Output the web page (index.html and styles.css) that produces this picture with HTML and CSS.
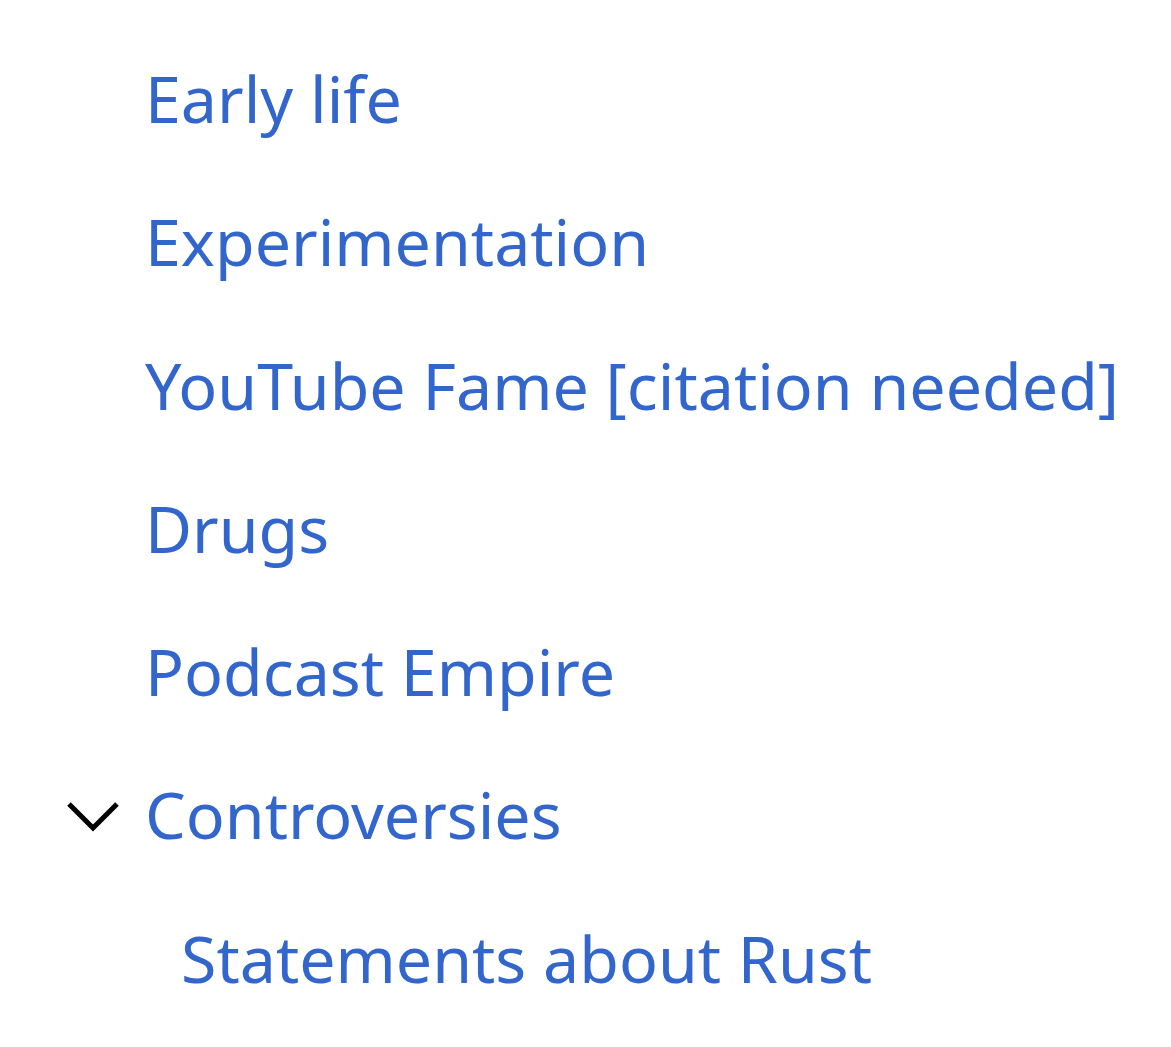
FILE: index.html
```html
<!DOCTYPE html>
<html lang="en">
<head>
<meta charset="utf-8">
<link rel="stylesheet" href="styles.css">
<title>Contents</title>
</head>
<body>
<nav class="toc">
  <ul class="toc-list">
    <li class="toc-item"><a class="toc-link" href="#early">Early life</a></li>
    <li class="toc-item"><a class="toc-link" href="#exp">Experimentation</a></li>
    <li class="toc-item"><a class="toc-link" href="#yt">YouTube Fame [citation needed]</a></li>
    <li class="toc-item"><a class="toc-link" href="#drugs">Drugs</a></li>
    <li class="toc-item"><a class="toc-link" href="#podcast">Podcast Empire</a></li>
    <li class="toc-item toc-expanded">
      <span class="toc-toggle" aria-hidden="true">
        <svg class="chevron" viewBox="0 0 56 34" width="56" height="34"><path d="M4 5 L28 29 L52 5" fill="none" stroke="#000" stroke-width="5"/></svg>
      </span>
      <a class="toc-link" href="#contro">Controversies</a>
    </li>
    <li class="toc-item toc-sub"><a class="toc-link" href="#rust">Statements about Rust</a></li>
  </ul>
</nav>
</body>
</html>
```
FILE: styles.css
```css
html, body {
  margin: 0;
  padding: 0;
  background: #fff;
}
body {
  font-family: "Noto Sans", "Open Sans", sans-serif;
}
.toc {
  padding-top: 27px;
}
.toc-list {
  list-style: none;
  margin: 0;
  padding: 0 0 0 145px;
}
.toc-item {
  position: relative;
  font-size: 64.5px;
  line-height: 143.3px;
  white-space: nowrap;
}
.toc-link {
  color: #3366cc;
  text-decoration: none;
}
.toc-sub {
  padding-left: 36px;
}
.toc-toggle {
  position: absolute;
  left: -80px;
  top: 56px;
  width: 56px;
  height: 34px;
  display: flex;
}
.chevron {
  display: block;
}
```
